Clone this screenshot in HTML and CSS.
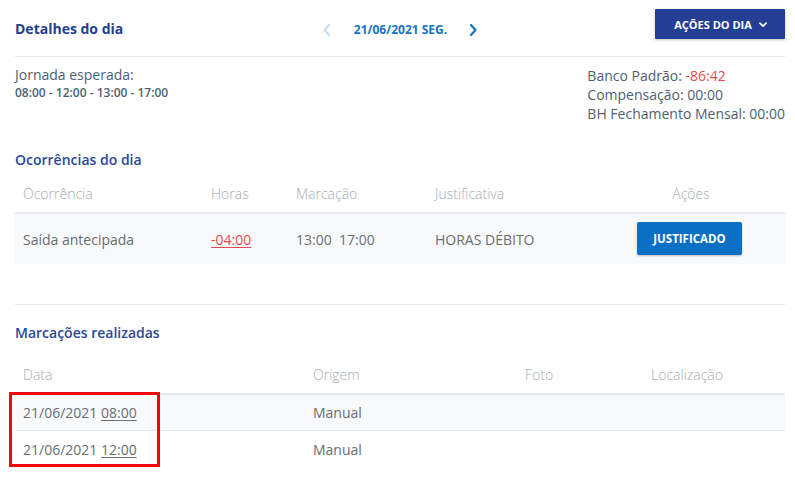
FILE: index.html
```html
<!DOCTYPE html>
<html lang="pt-BR">
<head>
<meta charset="utf-8">
<title>Detalhes do dia</title>
<link rel="stylesheet" href="styles.css">
</head>
<body>
<div class="page">
  <header class="header">
    <h1 class="title">Detalhes do dia</h1>
    <div class="date-nav">
      <svg class="chev chev-prev" width="9" height="12" viewBox="0 0 9 12"><path d="M7 1 L2.5 6 L7 11" fill="none" stroke="currentColor" stroke-width="2.2" stroke-linecap="round" stroke-linejoin="round"/></svg>
      <span class="date">21/06/2021 SEG.</span>
      <svg class="chev chev-next" width="9" height="12" viewBox="0 0 9 12"><path d="M2 1 L6.5 6 L2 11" fill="none" stroke="currentColor" stroke-width="2.2" stroke-linecap="round" stroke-linejoin="round"/></svg>
    </div>
    <div class="actions">
      <button class="btn-actions">AÇÕES DO DIA
        <svg class="caret" width="8" height="6" viewBox="0 0 8 6"><path d="M1 1.2 L4 4.2 L7 1.2" fill="none" stroke="currentColor" stroke-width="1.8" stroke-linecap="round" stroke-linejoin="round"/></svg>
      </button>
    </div>
  </header>

  <section class="info">
    <div class="jornada">
      <div class="jornada-label">Jornada esperada:</div>
      <div class="jornada-hours">08:00 - 12:00 - 13:00 - 17:00</div>
    </div>
    <div class="bancos">
      <div>Banco Padrão: <span class="neg">-86:42</span></div>
      <div>Compensação: 00:00</div>
      <div>BH Fechamento Mensal: 00:00</div>
    </div>
  </section>

  <section class="block">
    <h2 class="section-title">Ocorrências do dia</h2>
    <div class="table occ">
      <div class="row head">
        <div>Ocorrência</div>
        <div>Horas</div>
        <div>Marcação</div>
        <div>Justificativa</div>
        <div class="center">Ações</div>
      </div>
      <div class="row body occ-row">
        <div>Saída antecipada</div>
        <div><span class="neg-link">-04:00</span></div>
        <div>13:00&nbsp; 17:00</div>
        <div>HORAS DÉBITO</div>
        <div class="center"><button class="btn-just">JUSTIFICADO</button></div>
      </div>
    </div>
  </section>

  <section class="block marc-block">
    <h2 class="section-title">Marcações realizadas</h2>
    <div class="table marc">
      <div class="row head">
        <div>Data</div>
        <div>Origem</div>
        <div>Foto</div>
        <div>Localização</div>
      </div>
      <div class="row body striped">
        <div>21/06/2021 <span class="time">08:00</span></div>
        <div>Manual</div>
        <div></div>
        <div></div>
      </div>
      <div class="row body">
        <div>21/06/2021 <span class="time">12:00</span></div>
        <div>Manual</div>
        <div></div>
        <div></div>
      </div>
      <div class="highlight"></div>
    </div>
  </section>
</div>
</body>
</html>
```

FILE: styles.css
```css
* { box-sizing: border-box; }

html, body {
  margin: 0;
  padding: 0;
  background: #ffffff;
}

body {
  font-family: "Open Sans", "Liberation Sans", Arial, sans-serif;
  font-size: 14px;
  color: #666a6e;
  overflow: hidden;
}

.page {
  width: 795px;
  padding: 0 10px 0 15px;
}

/* Header */
.header {
  display: grid;
  grid-template-columns: 1fr auto 1fr;
  align-items: center;
  height: 57px;
  border-bottom: 1px solid #e8ebef;
}

.title {
  margin: 0;
  font-size: 14px;
  font-weight: 700;
  color: #25408f;
  line-height: 20px;
  padding-top: 1px;
}

.date-nav {
  display: flex;
  align-items: center;
  padding-top: 3px;
}

.chev { display: block; }
.chev-prev { color: #c9dcf0; margin-right: 23px; }
.chev-next { color: #1672c4; margin-left: 22px; }

.date {
  font-size: 12px;
  font-weight: 700;
  color: #1672c4;
}

.actions {
  justify-self: end;
  align-self: start;
  padding-top: 9px;
}

.btn-actions {
  display: flex;
  align-items: center;
  justify-content: center;
  gap: 7px;
  width: 130px;
  height: 30px;
  border: 0;
  border-radius: 1px;
  background: #233e94;
  color: #ffffff;
  font-family: inherit;
  font-size: 11px;
  font-weight: 700;
  box-shadow: 0 1px 3px rgba(0, 0, 0, 0.25);
  padding: 0 0 0 1px;
}

.caret { display: block; margin-top: 1px; }

/* Info */
.info {
  display: flex;
  justify-content: space-between;
  padding-top: 8px;
  color: #4e5f74;
}

.jornada-label {
  font-size: 14px;
  line-height: 20px;
}

.jornada-hours {
  font-size: 12px;
  font-weight: 600;
  line-height: 16px;
}

.bancos {
  font-size: 14px;
  line-height: 19px;
  padding-top: 1px;
  white-space: nowrap;
}

.neg { color: #e24c4c; }

/* Sections */
.block {
  margin-top: 27px;
}

.section-title {
  margin: 0;
  font-size: 14px;
  font-weight: 600;
  line-height: 20px;
  color: #2c4898;
}

.table {
  position: relative;
  margin-top: 6px;
}

.row {
  display: grid;
  align-items: center;
}

.occ .row {
  grid-template-columns: 188px 85px 139px 170px 188px;
}

.marc .row {
  grid-template-columns: 290px 212px 126px 142px;
}

.row > div {
  padding-left: 8px;
  white-space: nowrap;
}

.row > div.center {
  padding-left: 0;
  text-align: center;
}

.head {
  height: 38px;
  border-bottom: 2px solid #e4e9ef;
  color: #a3adb3;
  font-weight: 300;
  padding-bottom: 2px;
}

.body {
  color: #6a6d70;
}

.occ-row {
  height: 50px;
  background: #f8f9fb;
}

.neg-link {
  color: #e24c4c;
  text-decoration: underline;
  text-underline-offset: 2px;
}

.btn-just {
  width: 105px;
  height: 33px;
  border: 0;
  border-radius: 2px;
  background: #0b6fc4;
  color: #ffffff;
  font-family: inherit;
  font-size: 11.5px;
  font-weight: 700;
  box-shadow: 0 1px 2px rgba(0, 0, 0, 0.25);
  margin-left: -3px;
  margin-top: -2px;
}

.marc-block {
  margin-top: 40px;
  border-top: 1px solid #e8ebef;
  padding-top: 18px;
}

.marc {
  margin-top: 14px;
}

.marc .row.body {
  height: 36px;
}

.marc .striped {
  background: #f8f9fb;
  border-bottom: 1px solid #e4e9ef;
  height: 35px;
}

.time {
  text-decoration: underline;
  text-underline-offset: 2px;
}

.highlight {
  position: absolute;
  left: -6px;
  top: 35px;
  width: 151px;
  height: 75px;
  border: 3px solid #f2060c;
  pointer-events: none;
}
```
